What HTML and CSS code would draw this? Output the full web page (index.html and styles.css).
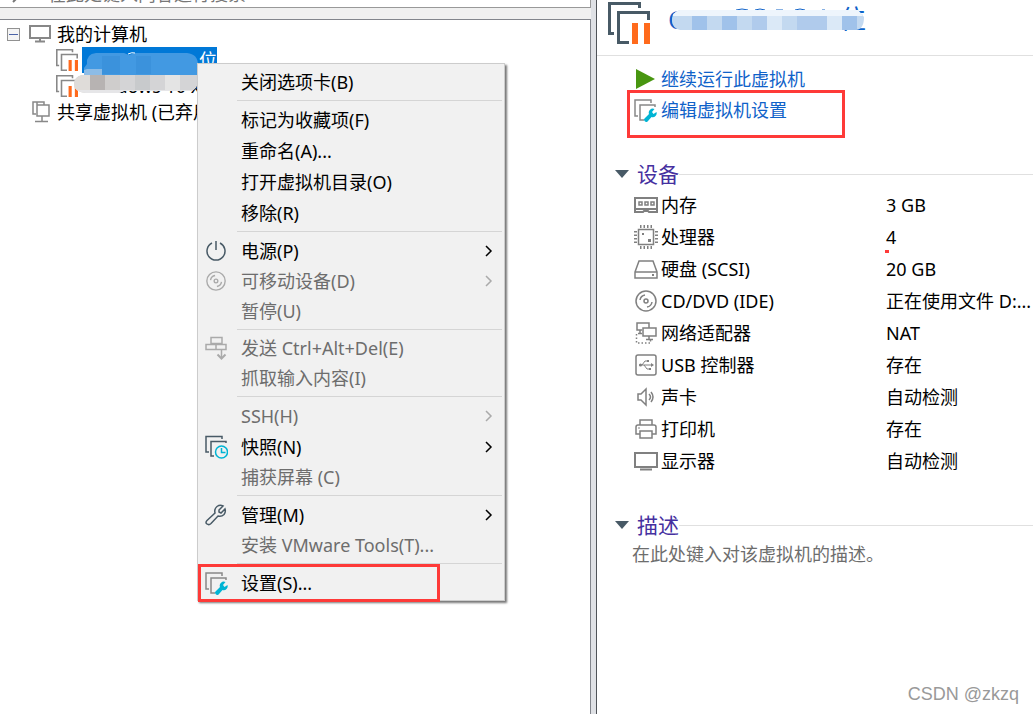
FILE: index.html
```html
<!DOCTYPE html>
<html lang="zh-CN">
<head>
    <meta charset="UTF-8">
    <meta name="viewport" content="width=device-width, initial-scale=1.0">
    <title>虚拟机</title>
    <link rel="stylesheet" href="styles.css">
</head>
<body>
    <!-- 共用图标 -->
    <svg class="symbols" aria-hidden="true">
        <symbol id="vm-frames" viewBox="0 0 42 42">
            <path d="M31.500 6V1.500H1.500V31.500H6M40.500 18V10.500H10.500V40.500H21" fill="none" stroke="currentColor" stroke-width="3"/>
        </symbol>
        <symbol id="vm-paused" viewBox="0 0 42 42">
            <use href="#vm-frames"/>
            <path d="M24 21h6v21h-6zM36 21h6v21h-6z" fill="#ff6a1c"/>
        </symbol>
        <symbol id="vm-settings" viewBox="0 0 24 24">
            <path d="M18 5V2H2v16h3M22 9V7H7v15h4" fill="none" stroke="currentColor" stroke-width="1.500"/>
            <path d="M11.500 20.500 16 16a4 4 0 0 1 5.500-5l-2.500 3 1.500 2 3-2a4 4 0 0 1-5 5L15 23a2 2 0 0 1-3.500-2.500z" fill="#00b4d4"/>
        </symbol>
        <symbol id="disc" viewBox="0 0 24 24">
            <g fill="none" stroke="currentColor" stroke-width="1.500">
                <circle cx="12" cy="12" r="10"/>
                <circle cx="12" cy="12" r="2"/>
                <path d="M6 11a6 6 0 0 1 5-5M18 13a6 6 0 0 1-5 5"/>
            </g>
        </symbol>
        <symbol id="arrow" viewBox="0 0 8 12">
            <path d="m1 1 5 5-5 5" fill="none" stroke="currentColor" stroke-width="1.500"/>
        </symbol>
    </svg>

    <div class="app">
        <div class="library">
            <div class="search">
                <svg width="18" height="18" viewBox="0 0 18 18"><path d="M1 13l6-6" stroke="#777" stroke-width="2"/><circle cx="11" cy="5" r="4" fill="none" stroke="#777" stroke-width="2"/></svg>
                <input type="text" aria-label="搜索" placeholder="在此处键入内容进行搜索">
            </div>
            <div class="tree-panel">
                <ul class="tree">
                    <li class="node root">
                        <button class="toggle" aria-label="折叠"></button>
                        <svg width="22" height="18" viewBox="0 0 22 18"><path d="M1 1h20v12H1zM11 13v3M6 16.500h10" fill="none" stroke="#888" stroke-width="2"/></svg>
                        <span>我的计算机</span>
                    </li>
                    <li class="node child">
                        <svg class="grey" width="22" height="22"><use href="#vm-paused"/></svg>
                        <span class="name selected">位
                            <svg class="mosaic mosaic-blue" width="114" height="26" viewBox="0 0 114 26">
                                <path d="M12 1h28l5 2 6-2h52q11 1 11 12v13H0V16L3 12Q2 2 12 1z" fill="#4299e2"/>
                                <path d="M18 4h18v18H18zM52 4h15v18H52z" fill="#3b92dc"/>
                                <path d="M3 17h15v9H0v-8z" fill="#8dbce6"/>
                                <path d="M44 2q4-2 7-1" stroke="#fff" fill="none"/>
                            </svg>
                        </span>
                    </li>
                    <li class="node child">
                        <svg class="grey" width="22" height="22"><use href="#vm-paused"/></svg>
                        <span class="name">Windows 10 x64
                            <svg class="mosaic mosaic-grey" width="123" height="18" viewBox="0 0 123 18">
                                <clipPath id="grey-clip"><path d="M8 0h115v11q-2 5-8 5H50l-5 2H12Q0 17 0 9 0 2 8 0z"/></clipPath>
                                <g clip-path="url(#grey-clip)">
                                    <path d="M0 0h123v18H0z" fill="#d4d4d6"/>
                                    <path d="M0 0h16v18H0z" fill="#dfdcd9"/>
                                    <path d="M16 0h15v18H16z" fill="#b7b3b2"/>
                                    <path d="M31 0h15v18H31z" fill="#cfcdcc"/>
                                    <path d="M61 0h15v18H61z" fill="#c8cacc"/>
                                    <path d="M91 0h15v18H91z" fill="#e4e4e4"/>
                                    <path d="M0 15h123v3H0z" fill="#e6e6e8"/>
                                </g>
                            </svg>
                        </span>
                    </li>
                    <li class="node shared">
                        <svg width="18" height="22" viewBox="0 0 18 22"><path d="M5 4V1H1v12h3M1 1h11v3M5 4h12v11H5zM10 15v5M3 20.500h13" fill="none" stroke="#888" stroke-width="1.500"/></svg>
                        <span>共享虚拟机 (已弃用)</span>
                    </li>
                </ul>
            </div>
        </div>

        <div class="splitter"></div>

        <main class="summary">
            <header class="summary-header">
                <svg class="dark" width="42" height="42"><use href="#vm-paused"/></svg>
                <h1 class="vm-title">
                    <span>C</span><span>位</span>
                    <svg class="mosaic mosaic-title" width="192" height="24" viewBox="0 0 192 24">
                        <clipPath id="title-clip"><path d="M8 2h178l6 7q0 13-9 13H8Q0 20 0 12 0 4 8 2z"/></clipPath>
                        <path d="M64 2q6-2 12 0M83 2q5-2 10 0M104 2h7M123 2q5-2 10 0M150 2h3" fill="none" stroke="#0f62c9"/>
                        <g clip-path="url(#title-clip)">
                            <path d="M0 2h192v20H0z" fill="#c3d9f0"/>
                            <path d="M0 2h192v6H0z" fill="#eef5fc"/>
                            <path d="M20 8h15v14H20zM50 8h15v14H50zM170 8h15v14h-15z" fill="#a0c2ea"/>
                            <path d="M80 8h15v14H80zM125 8h30v14h-30z" fill="#b0cbec"/>
                            <path d="M95 8h15v14H95zM155 8h15v14h-15z" fill="#dbe9f7"/>
                        </g>
                    </svg>
                </h1>
            </header>

            <nav class="actions">
                <a href="#" class="action">
                    <svg width="24" height="22" viewBox="0 0 24 22"><path d="M3 1v20l19-10z" fill="#489610"/></svg>
                    <span>继续运行此虚拟机</span>
                </a>
                <a href="#" class="action edit">
                    <svg class="grey" width="24" height="24"><use href="#vm-settings"/></svg>
                    <span>编辑虚拟机设置</span>
                </a>
            </nav>

            <section class="devices">
                <h2 class="section-title"><button><span class="triangle"></span>设备</button></h2>
                <table class="device-table">
                    <tr>
                        <th scope="row"><div class="device"><svg width="24" height="24" viewBox="0 0 24 24"><path d="M1 5h22v14h-8l-1-1h-4l-1 1H1zM1 16h22" fill="none" stroke="currentColor" stroke-width="2"/><path d="M5 9h3v3H5zM11 9h3v3h-3zM17 9h3v3h-3z" fill="none" stroke="currentColor" stroke-width="1.500"/></svg>内存</div></th>
                        <td>3 GB</td>
                    </tr>
                    <tr>
                        <th scope="row"><div class="device"><svg width="24" height="24" viewBox="0 0 24 24"><path d="M4.500 4.500h15v15h-15z" fill="none" stroke="currentColor" stroke-width="1.500"/><path d="M6 1.500h13M6 22.500h13M1.500 6v13M22.500 6v13" stroke="currentColor" stroke-width="3" stroke-dasharray="1.500 2"/><path d="M8 8h2v2H8zM14 14h3v3h-3z" fill="currentColor"/></svg>处理器</div></th>
                        <td><span class="marked">4</span></td>
                    </tr>
                    <tr>
                        <th scope="row"><div class="device"><svg width="24" height="24" viewBox="0 0 24 24"><path d="M1 15 5 4h14l4 11v6H1zM1 15h22" fill="none" stroke="currentColor" stroke-width="1.500"/><path d="M18 17h2v2h-2z" fill="currentColor"/></svg>硬盘 (SCSI)</div></th>
                        <td>20 GB</td>
                    </tr>
                    <tr>
                        <th scope="row"><div class="device"><svg width="24" height="24"><use href="#disc"/></svg>CD/DVD (IDE)</div></th>
                        <td>正在使用文件 D:...</td>
                    </tr>
                    <tr>
                        <th scope="row"><div class="device"><svg width="24" height="24" viewBox="0 0 24 24"><path d="M8 9H3V2h12v5M9 7h13v8H9zM15 15v3M12 18.500h7M6 9v3M4 12.500h4" fill="none" stroke="currentColor" stroke-width="1.500"/><path d="M2.500 13v9h14v-3" fill="none" stroke="currentColor" stroke-width="1.500" stroke-dasharray="1.500 2"/></svg>网络适配器</div></th>
                        <td>NAT</td>
                    </tr>
                    <tr>
                        <th scope="row"><div class="device"><svg width="24" height="24" viewBox="0 0 24 24"><rect x="2" y="2" width="20" height="20" rx="2" fill="none" stroke="currentColor" stroke-width="1.500"/><path d="M5 12h13M8 12l3-4h3M10 12l3 4h3" fill="none" stroke="currentColor"/><circle cx="6.500" cy="12" r="1.500" fill="currentColor"/><path d="M17 10l3 2-3 2zM13 7h2v2h-2zM15 15h2v2h-2z" fill="currentColor"/></svg>USB 控制器</div></th>
                        <td>存在</td>
                    </tr>
                    <tr>
                        <th scope="row"><div class="device"><svg width="24" height="24" viewBox="0 0 24 24"><path d="M4 9h3l5-5v16l-5-5H4z" fill="none" stroke="currentColor" stroke-width="1.500"/><path d="M15 9q3 3 0 6M17 7q4 5 0 10" fill="none" stroke="currentColor" stroke-width="1.500"/></svg>声卡</div></th>
                        <td>自动检测</td>
                    </tr>
                    <tr>
                        <th scope="row"><div class="device"><svg width="24" height="24" viewBox="0 0 24 24"><path d="M6 8V3h12v5M6 17H2V10q0-2 2-2h16q2 0 2 2v7h-4M6 14h12v7H6z" fill="none" stroke="currentColor" stroke-width="1.500"/><path d="M4 11h2" stroke="currentColor"/></svg>打印机</div></th>
                        <td>存在</td>
                    </tr>
                    <tr>
                        <th scope="row"><div class="device"><svg width="24" height="24" viewBox="0 0 24 24"><path d="M1 4h22v14H1z" fill="none" stroke="currentColor" stroke-width="2"/><path d="M6 20.500h12" stroke="currentColor" stroke-width="2"/></svg>显示器</div></th>
                        <td>自动检测</td>
                    </tr>
                </table>
            </section>

            <section class="description">
                <h2 class="section-title"><button><span class="triangle"></span>描述</button></h2>
                <textarea aria-label="描述" placeholder="在此处键入对该虚拟机的描述。"></textarea>
            </section>
        </main>
    </div>

    <!-- 右键菜单 -->
    <div class="menu" role="menu">
        <button class="item" role="menuitem"><span class="icon"></span>关闭选项卡(B)</button>
        <hr>
        <button class="item" role="menuitem"><span class="icon"></span>标记为收藏项(F)</button>
        <button class="item" role="menuitem"><span class="icon"></span>重命名(A)...</button>
        <button class="item" role="menuitem"><span class="icon"></span>打开虚拟机目录(O)</button>
        <button class="item" role="menuitem"><span class="icon"></span>移除(R)</button>
        <hr>
        <button class="item" role="menuitem">
            <span class="icon"><svg class="dark" width="24" height="24" viewBox="0 0 24 24"><path d="M8 4a9 9 0 1 0 8 0M12 2v9" fill="none" stroke="currentColor" stroke-width="1.500"/></svg></span>
            电源(P)<svg class="arrow" width="8" height="12"><use href="#arrow"/></svg>
        </button>
        <button class="item" role="menuitem" disabled>
            <span class="icon"><svg width="22" height="22"><use href="#disc"/></svg></span>
            可移动设备(D)<svg class="arrow" width="8" height="12"><use href="#arrow"/></svg>
        </button>
        <button class="item" role="menuitem" disabled><span class="icon"></span>暂停(U)</button>
        <hr>
        <button class="item" role="menuitem" disabled>
            <span class="icon"><svg width="24" height="24" viewBox="0 0 24 24"><path d="M7 1.500h11v6H7zM2 8.500h20v5H2zM12 8.500v5M17.500 14v7" fill="none" stroke="currentColor" stroke-width="1.500"/><path d="m13.500 18.500 4 4 4-4" fill="none" stroke="currentColor" stroke-width="2"/></svg></span>
            发送 Ctrl+Alt+Del(E)
        </button>
        <button class="item" role="menuitem" disabled><span class="icon"></span>抓取输入内容(I)</button>
        <hr>
        <button class="item submenu" role="menuitem" disabled><span class="icon"></span>SSH(H)<svg class="arrow" width="8" height="12"><use href="#arrow"/></svg></button>
        <button class="item" role="menuitem">
            <span class="icon"><svg class="dark" width="24" height="24" viewBox="0 0 24 24"><path d="M18 4V1.500H2V17h3M22 8V6.500H7V21h3" fill="none" stroke="currentColor" stroke-width="1.500"/><circle cx="17.500" cy="17" r="6" fill="#f1f1f1" stroke="#00b4d4" stroke-width="1.500"/><path d="M17.500 13v4.500h4" fill="none" stroke="#00b4d4" stroke-width="1.500"/></svg></span>
            快照(N)<svg class="arrow" width="8" height="12"><use href="#arrow"/></svg>
        </button>
        <button class="item" role="menuitem" disabled><span class="icon"></span>捕获屏幕 (C)</button>
        <hr>
        <button class="item" role="menuitem">
            <span class="icon"><svg class="dark" width="24" height="24" viewBox="0 0 24 24"><path d="M3 17.500 11 10q-1-4 2-6.500 3-2 6-.500L15 7v2l2 1 4-4q1 3-1 5.500-2.500 2.500-6 1.500L7 20.500q-2 2-4 .5t0-3.500z" fill="none" stroke="currentColor" stroke-width="1.500"/></svg></span>
            管理(M)<svg class="arrow" width="8" height="12"><use href="#arrow"/></svg>
        </button>
        <button class="item" role="menuitem" disabled><span class="icon"></span>安装 VMware Tools(T)...</button>
        <hr>
        <button class="item settings" role="menuitem">
            <span class="icon"><svg class="grey" width="24" height="24"><use href="#vm-settings"/></svg></span>
            设置(S)...
        </button>
    </div>

    <div class="watermark">CSDN @zkzq</div>
</body>
</html>
```
FILE: styles.css
```css
*, *::before, *::after{
    box-sizing: border-box;
    margin: 0;
    padding: 0;
}
body{
    position: relative;
    min-height: 100vh;
    overflow: hidden;
    background-color: #fff;
    color: #000;
    font-family: "Noto Sans", "Noto Sans CJK SC", sans-serif;
    font-size: 18px;
    line-height: 26px;
}
button, input, textarea{
    border: none;
    background: none;
    color: inherit;
    font: inherit;
}
svg{
    flex-shrink: 0;
}
.symbols{
    position: absolute;
    width: 0;
    height: 0;
}
.grey{
    color: #888;
}
.dark{
    color: #485a66;
}

.app{
    display: grid;
    grid-template-columns: minmax(0, 1fr) 6px 42.2%;
    min-height: 100vh;
}

/* 左侧:虚拟机库 */
.library{
    display: flex;
    flex-direction: column;
    background-color: #f0f0f0;
}
.search{
    display: flex;
    align-items: flex-end;
    gap: 18px;
    height: 8px;
    padding: 0 12px;
    overflow: hidden;
    background-color: #fff;
    border-bottom: 1px solid #999;
    border-right: 1px solid #999;
}
.search input{
    flex: 1;
    height: 26px;
}
.search input::placeholder{
    color: #777;
}
.tree-panel{
    flex: 1;
    margin-top: 11px;
    padding-top: 1px;
    background-color: #fff;
    border-top: 1px solid #82858c;
    border-right: 1px solid #82858c;
}
.tree{
    list-style: none;
}
.node{
    display: flex;
    align-items: center;
    height: 26px;
    white-space: nowrap;
}
.root{
    gap: 6px;
    padding-left: 7px;
}
.toggle{
    width: 13px;
    height: 13px;
    margin-right: 3px;
    border: 1px solid #919191;
    background: linear-gradient(#4b63a7, #4b63a7) center / 9px 1px no-repeat, #f4f4f4;
}
.child{
    gap: 4px;
    padding-left: 56px;
}
.shared{
    gap: 7px;
    padding-left: 32px;
}
.name{
    position: relative;
    width: 135px;
    padding-left: 2px;
}
.selected{
    background-color: #0078d7;
    color: #fff;
    text-align: right;
}
.mosaic{
    position: absolute;
}
.mosaic-blue{
    left: 2px;
    top: 5px;
}
.mosaic-grey{
    left: -8px;
    top: 2px;
}

.splitter{
    background-color: #dfe1e5;
    border-right: 1px solid #4f5358;
}

/* 右侧:虚拟机摘要 */
.summary-header{
    display: flex;
    align-items: flex-start;
    gap: 18px;
    height: 56px;
    padding: 2px 11px;
    border-bottom: 1px solid #e0e0e0;
}
.vm-title{
    position: relative;
    display: flex;
    justify-content: space-between;
    width: 198px;
    color: #0f62c9;
    font-size: 26px;
    font-weight: normal;
    line-height: 34px;
}
.mosaic-title{
    left: 4px;
    top: 6px;
}
.actions{
    padding: 7px 36px 0;
}
.action{
    display: flex;
    align-items: center;
    gap: 4px;
    height: 31px;
    color: #0f62c9;
    text-decoration: none;
}
.edit{
    position: relative;
}
.edit::after{
    content: "";
    position: absolute;
    left: -6px;
    top: -4px;
    width: 218px;
    height: 48px;
    border: 3px solid #fe3a38;
}
.section-title{
    display: flex;
    align-items: center;
    padding-left: 18px;
    font-weight: normal;
}
.section-title::after{
    content: "";
    flex: 1;
    height: 1px;
    background-color: #e0e0e0;
}
.section-title button{
    display: flex;
    align-items: center;
    gap: 8px;
    color: #4530a0;
    font-size: 21px;
    line-height: 30px;
}
.triangle{
    border: 7px solid transparent;
    border-top: 8px solid #485a66;
    border-bottom: none;
}
.devices{
    padding-top: 34px;
}
.device-table{
    width: 100%;
    table-layout: fixed;
    border-collapse: collapse;
}
.device-table tr{
    height: 32px;
}
.device-table th{
    width: 289px;
    padding-left: 37px;
    font-weight: normal;
    text-align: left;
}
.device{
    display: flex;
    align-items: center;
    gap: 3px;
}
.device svg{
    color: #808080;
}
.device-table td{
    white-space: nowrap;
}
.marked{
    position: relative;
}
.marked::after{
    content: "";
    position: absolute;
    left: -1px;
    bottom: -4px;
    width: 4px;
    height: 3px;
    background-color: #fe3a38;
}
.description{
    padding-top: 33px;
}
.description textarea{
    display: block;
    width: 100%;
    height: 80px;
    padding-top: 1px;
    padding-left: 35px;
    resize: none;
}
.description textarea::placeholder{
    color: #6d6d6d;
}

/* 右键菜单 */
.menu{
    position: absolute;
    left: 197px;
    top: 63px;
    width: 308px;
    padding: 2px;
    background-color: #f1f1f1;
    border: 1px solid #ccc;
    box-shadow: 2px 2px 2px #777;
}
.menu hr{
    height: 1px;
    margin: 3px 0 3px 37px;
    border: none;
    background-color: #d5d5d5;
}
.item{
    position: relative;
    display: flex;
    align-items: center;
    width: 100%;
    height: 31px;
    white-space: nowrap;
    text-align: left;
}
.item:disabled{
    height: 30px;
    color: #6d6d6d;
}
.item.submenu{
    height: 31px;
}
.icon{
    display: flex;
    justify-content: center;
    width: 32px;
    margin-right: 9px;
}
.item:disabled svg{
    color: #aaa;
}
.item .arrow{
    margin-left: auto;
    margin-right: 9px;
}
.settings::after{
    content: "";
    position: absolute;
    left: -2px;
    top: -3px;
    width: 242px;
    height: 38px;
    border: 3px solid #fe3a38;
}

.watermark{
    position: absolute;
    right: 14px;
    bottom: 7px;
    color: #999;
    font-family: "Liberation Sans", sans-serif;
    font-size: 18px;
}
```
